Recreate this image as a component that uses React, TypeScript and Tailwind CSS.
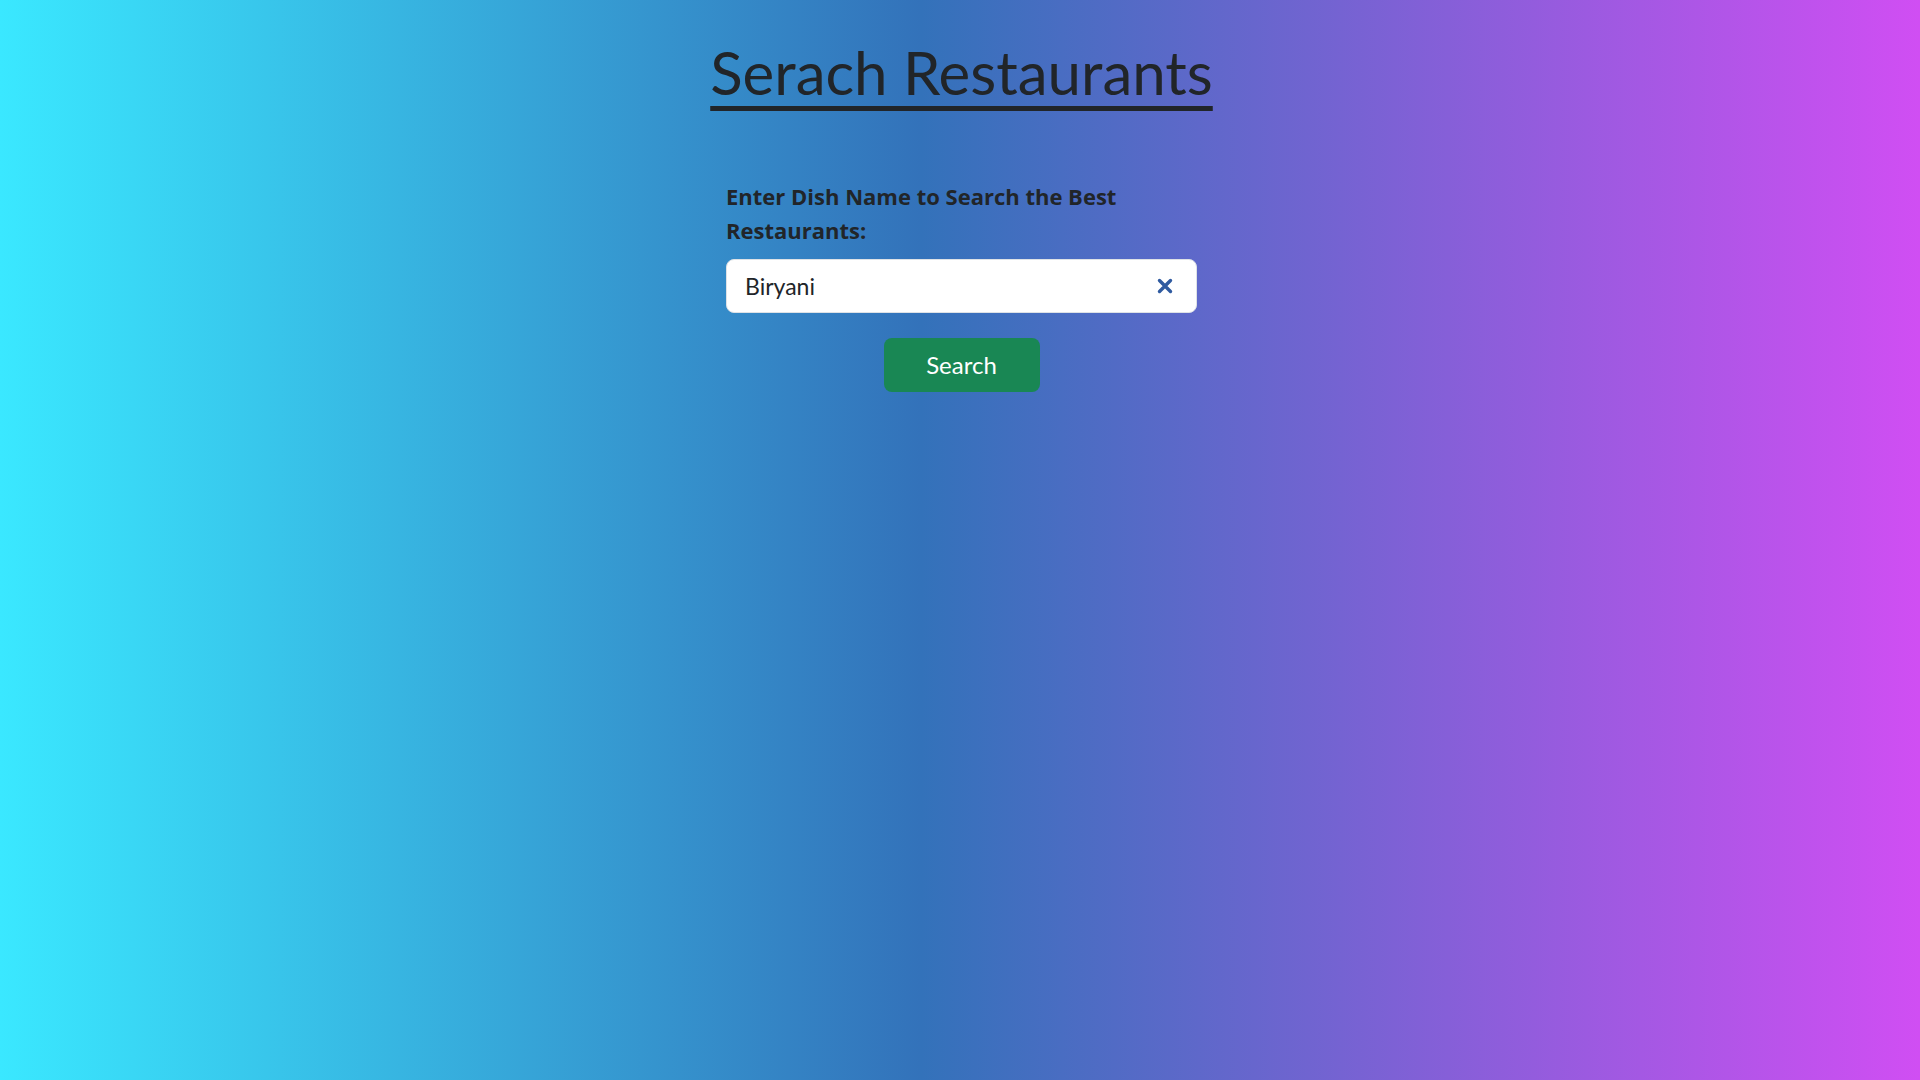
import React, { useState } from 'react';

export default function App() {
  const [dish, setDish] = useState('Biryani');

  return (
    <div
      className="min-h-screen w-full bg-[linear-gradient(90deg,#3ae8ff_0%,#3372ba_48%,#d04ef3_100%)] text-[#212529]"
      style={{ fontFamily: 'Lato, "Open Sans", sans-serif' }}
    >
      <div className="flex flex-col items-center pt-[36px]">
        <h1 className="ml-[3px] text-[60px] leading-[1.2] font-normal underline decoration-[5px] underline-offset-[11px]">
          Serach Restaurants
        </h1>

        <form
          className="mt-[71px] w-[471px] ml-[3px]"
          onSubmit={(e) => e.preventDefault()}
        >
          <label
            className="block text-[22px] leading-[34px] font-bold"
            style={{ fontFamily: '"Open Sans", sans-serif' }}
          >
            Enter Dish Name to Search the Best
            <br />
            Restaurants:
          </label>

          <div className="relative mt-[12px]">
            <input
              value={dish}
              onChange={(e) => setDish(e.target.value)}
              className="block h-[54px] w-full rounded-lg border border-[#dee2e6] bg-white pl-[18px] pr-12 text-[23px] text-[#212529] outline-none"
            />
            {dish && (
              <button
                type="button"
                onClick={() => setDish('')}
                className="absolute right-[24px] top-1/2 -translate-y-1/2 text-[#2f5aa0]"
              >
                <svg width="16" height="16" viewBox="0 0 16 16">
                  <path
                    d="M2.5 2.5 L13.5 13.5 M13.5 2.5 L2.5 13.5"
                    stroke="currentColor"
                    strokeWidth="3.4"
                    strokeLinecap="round"
                  />
                </svg>
              </button>
            )}
          </div>

          <div className="mt-[25px] flex justify-center">
            <button
              type="submit"
              className="h-[54px] w-[156px] rounded-lg bg-[#198754] text-[24px] text-white"
            >
              Search
            </button>
          </div>
        </form>
      </div>
    </div>
  );
}
